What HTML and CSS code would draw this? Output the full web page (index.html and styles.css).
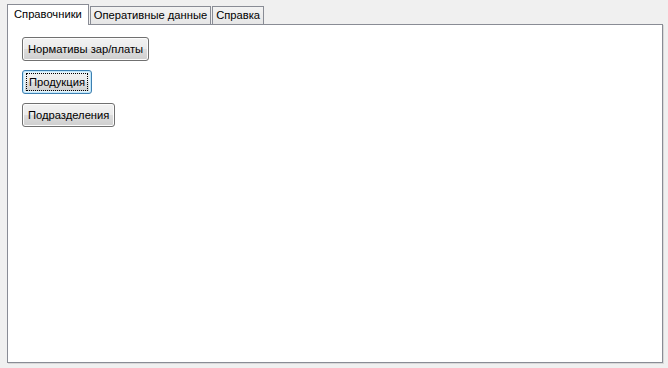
FILE: index.html
```html
<!DOCTYPE html>
<html lang="ru">
<head>
    <meta charset="UTF-8">
    <title>Справочники</title>
    <link rel="stylesheet" href="styles.css">
</head>
<body>
    <div class="window">
        <div class="tabs">
            <div class="tab active">Справочники</div>
            <div class="tab">Оперативные данные</div>
            <div class="tab">Справка</div>
        </div>
        <div class="panel">
            <div class="button">Нормативы зар/платы</div>
            <div class="button focused"><span class="focus">Продукция</span></div>
            <div class="button">Подразделения</div>
        </div>
    </div>
</body>
</html>
```

FILE: styles.css
```css
body {
    margin: 0;
    background-color: #f0f0f0;
    font-family: "Liberation Sans", Tahoma, sans-serif;
    font-size: 11.2px;
    color: #000;
}
.window {
    width: 668px;
    height: 368px;
    padding: 4px 5px 5px 7px;
    box-sizing: border-box;
    display: flex;
    flex-direction: column;
}
.tabs {
    display: flex;
    align-items: flex-end;
    height: 20px;
    position: relative;
    z-index: 1;
}
.tab {
    height: 18px;
    padding: 0 3px;
    line-height: 17px;
    border: 1px solid #898c95;
    border-bottom: none;
    background: linear-gradient(#f3f3f3, #e6e6e6);
    margin-left: 1px;
    box-sizing: border-box;
}
.tab.active {
    height: 21px;
    margin-left: 0;
    margin-bottom: -1px;
    padding: 0 6px;
    line-height: 18px;
    background: #fff;
}
.panel {
    flex: 1;
    background: #fff;
    border: 1px solid #898c95;
    box-shadow: 1px 1px 0 #d8d8d8;
    padding: 12px 14px;
    display: flex;
    flex-direction: column;
    align-items: flex-start;
    gap: 9px;
}
.button {
    height: 24px;
    line-height: 22px;
    padding: 0 5px;
    box-sizing: border-box;
    border: 1px solid #707070;
    border-radius: 3px;
    background: linear-gradient(#f2f2f2 0%, #ebebeb 50%, #dddddd 50%, #cfcfcf 100%);
    box-shadow: inset 0 0 0 1px #fcfcfc;
    cursor: pointer;
}
.button.focused {
    border-color: #3c7fb1;
    box-shadow: inset 0 0 0 1px #bfe6fa, inset 0 0 0 2px #e4f4fc;
    padding: 0 3px;
}
.focus {
    border: 1px dotted #000;
    padding: 0 2px;
    line-height: 16px;
    display: inline-block;
}
```
